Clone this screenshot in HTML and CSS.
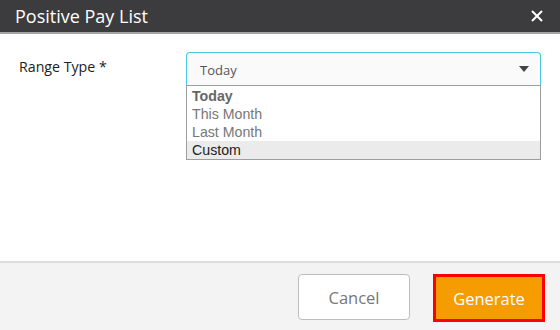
FILE: index.html
```html
<!DOCTYPE html>
<html>
<head>
<meta charset="utf-8">
<link rel="stylesheet" href="styles.css">
</head>
<body>
<div class="dialog">
  <div class="header">
    <span class="title">Positive Pay List</span>
    <svg class="close" width="12" height="12" viewBox="0 0 12 12"><path d="M1 1L11 11M11 1L1 11" stroke="#fff" stroke-width="2"/></svg>
  </div>
  <div class="content">
    <label class="label">Range Type *</label>
    <div class="field">
      <div class="select">
        <span class="value">Today</span>
        <span class="arrow"></span>
      </div>
      <ul class="list">
        <li class="opt bold">Today</li>
        <li class="opt">This Month</li>
        <li class="opt">Last Month</li>
        <li class="opt active">Custom</li>
      </ul>
    </div>
  </div>
  <div class="footer">
    <button class="btn cancel">Cancel</button>
    <button class="btn generate">Generate</button>
  </div>
</div>
</body>
</html>
```
FILE: styles.css
```css
* { box-sizing: border-box; }
html, body { margin: 0; padding: 0; }
body { width: 560px; height: 330px; background: #fff; font-family: "Open Sans", "Noto Sans", sans-serif; }
.dialog { width: 560px; height: 330px; display: flex; flex-direction: column; }
.header { height: 34px; background: #3c3c3e; border-bottom: 2px solid #a5a5a5; display: flex; align-items: center; justify-content: space-between; padding: 0 17px 0 15px; }
.title { color: #fff; font-size: 18px; letter-spacing: 0; line-height: 22px; margin-top: -1px; }
.close { display: block; margin-top: -1px; }
.content { flex: 1; display: flex; padding: 18px 19px 0 19px; }
.label { width: 167px; font-size: 14.2px; color: #222; padding-top: 6px; line-height: 18px; }
.field { width: 355px; }
.select { height: 33px; background: #fafafa; border: 1px solid #46c8e6; border-bottom: none; border-radius: 4px 4px 0 0; display: flex; align-items: center; justify-content: space-between; padding: 0 11px 0 13px; }
.value { font-size: 13px; color: #555; margin-top: 1px; }
.arrow { width: 0; height: 0; border-left: 5px solid transparent; border-right: 5px solid transparent; border-top: 6px solid #444; margin-top: -1px; }
.list { list-style: none; margin: 0; padding: 1px 0 0 0; border: 1px solid #9e9e9e; font-family: "Liberation Sans", Arial, sans-serif; font-size: 14.2px; }
.opt { height: 18px; line-height: 18px; padding-left: 5px; color: #777; }
.opt.bold { font-weight: bold; color: #666; }
.opt.active { background: #ebebeb; color: #222; }
.footer { height: 69px; background: #f3f3f3; border-top: 2px solid #dedede; display: flex; justify-content: flex-end; align-items: flex-start; padding: 11px 15px 0 0; gap: 23px; }
.btn { font-family: "Open Sans", "Noto Sans", sans-serif; font-size: 16.5px; width: 112px; cursor: pointer; }
.cancel { height: 46px; background: #fff; border: 1px solid #bdbdbd; border-radius: 4px; color: #777; }
.generate { height: 48px; background: #f59d00; border: 3px solid #ff0000; color: #fff; border-radius: 0; }
```
